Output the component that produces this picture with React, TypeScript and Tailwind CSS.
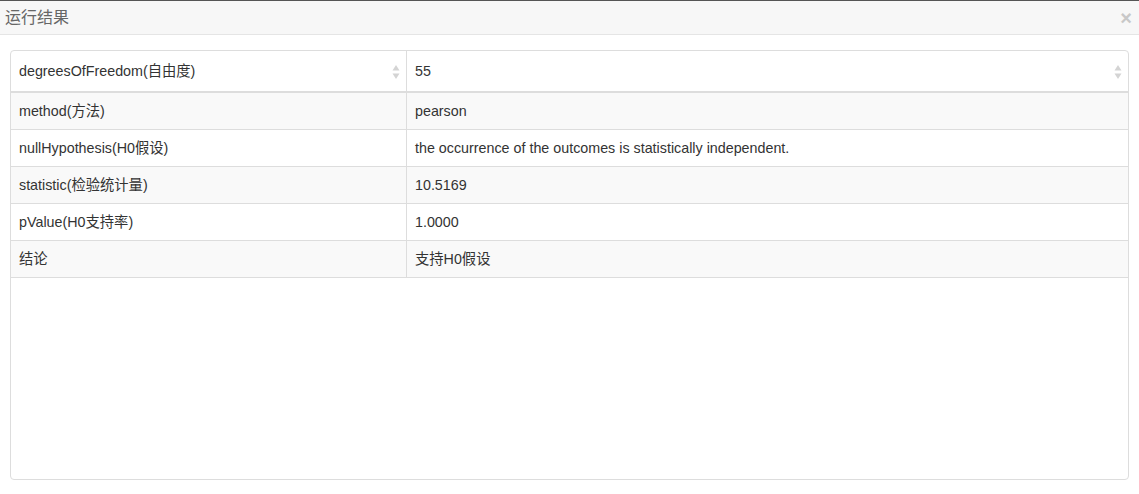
import React from "react";

const rows: [string, string][] = [
  ["method(方法)", "pearson"],
  ["nullHypothesis(H0假设)", "the occurrence of the outcomes is statistically independent."],
  ["statistic(检验统计量)", "10.5169"],
  ["pValue(H0支持率)", "1.0000"],
  ["结论", "支持H0假设"],
];

function SortIcon() {
  return (
    <svg width="8" height="16" viewBox="0 0 8 16" className="shrink-0">
      <path d="M4 1 L7.5 6.5 L0.5 6.5 Z" fill="#d4d4d4" />
      <path d="M4 15 L7.5 9.5 L0.5 9.5 Z" fill="#d4d4d4" />
    </svg>
  );
}

export default function App() {
  return (
    <div
      className="w-[1139px] h-[494px] bg-white text-[#333] overflow-hidden"
      style={{ fontFamily: '"Liberation Sans", Arial, "Noto Sans CJK SC", sans-serif' }}
    >
      <div className="border-t border-[#555] bg-[#f7f7f7] border-b border-b-[#e5e5e5] h-[35px] flex items-center justify-between pl-[5px] pr-[7px]">
        <span className="text-[16px] text-[#666] leading-none">运行结果</span>
        <span className="text-[#c8c8c8] text-[20px] font-bold leading-none mt-[1px]">×</span>
      </div>
      <div className="px-[10px] pt-[15px]">
        <div className="w-[1119px] h-[430px] border border-[#ddd] rounded-[4px] overflow-hidden text-[14.3px]">
          <div className="flex h-[42px] border-b-2 border-[#ddd]">
            <div className="w-[396px] flex items-center justify-between pl-[8px] pr-[6px] pt-[2px] border-r border-[#ddd]">
              <span>degreesOfFreedom(自由度)</span>
              <SortIcon />
            </div>
            <div className="flex-1 flex items-center justify-between pl-[8px] pr-[6px] pt-[2px]">
              <span>55</span>
              <SortIcon />
            </div>
          </div>
          {rows.map(([k, v], i) => (
            <div
              key={k}
              className={`flex h-[37px] border-b border-[#ddd] ${i % 2 === 0 ? "bg-[#f9f9f9]" : "bg-white"}`}
            >
              <div className="w-[396px] flex items-center pl-[8px] pt-[2px] border-r border-[#ddd]">{k}</div>
              <div className="flex-1 flex items-center pl-[8px] pt-[2px]">{v}</div>
            </div>
          ))}
        </div>
      </div>
    </div>
  );
}
